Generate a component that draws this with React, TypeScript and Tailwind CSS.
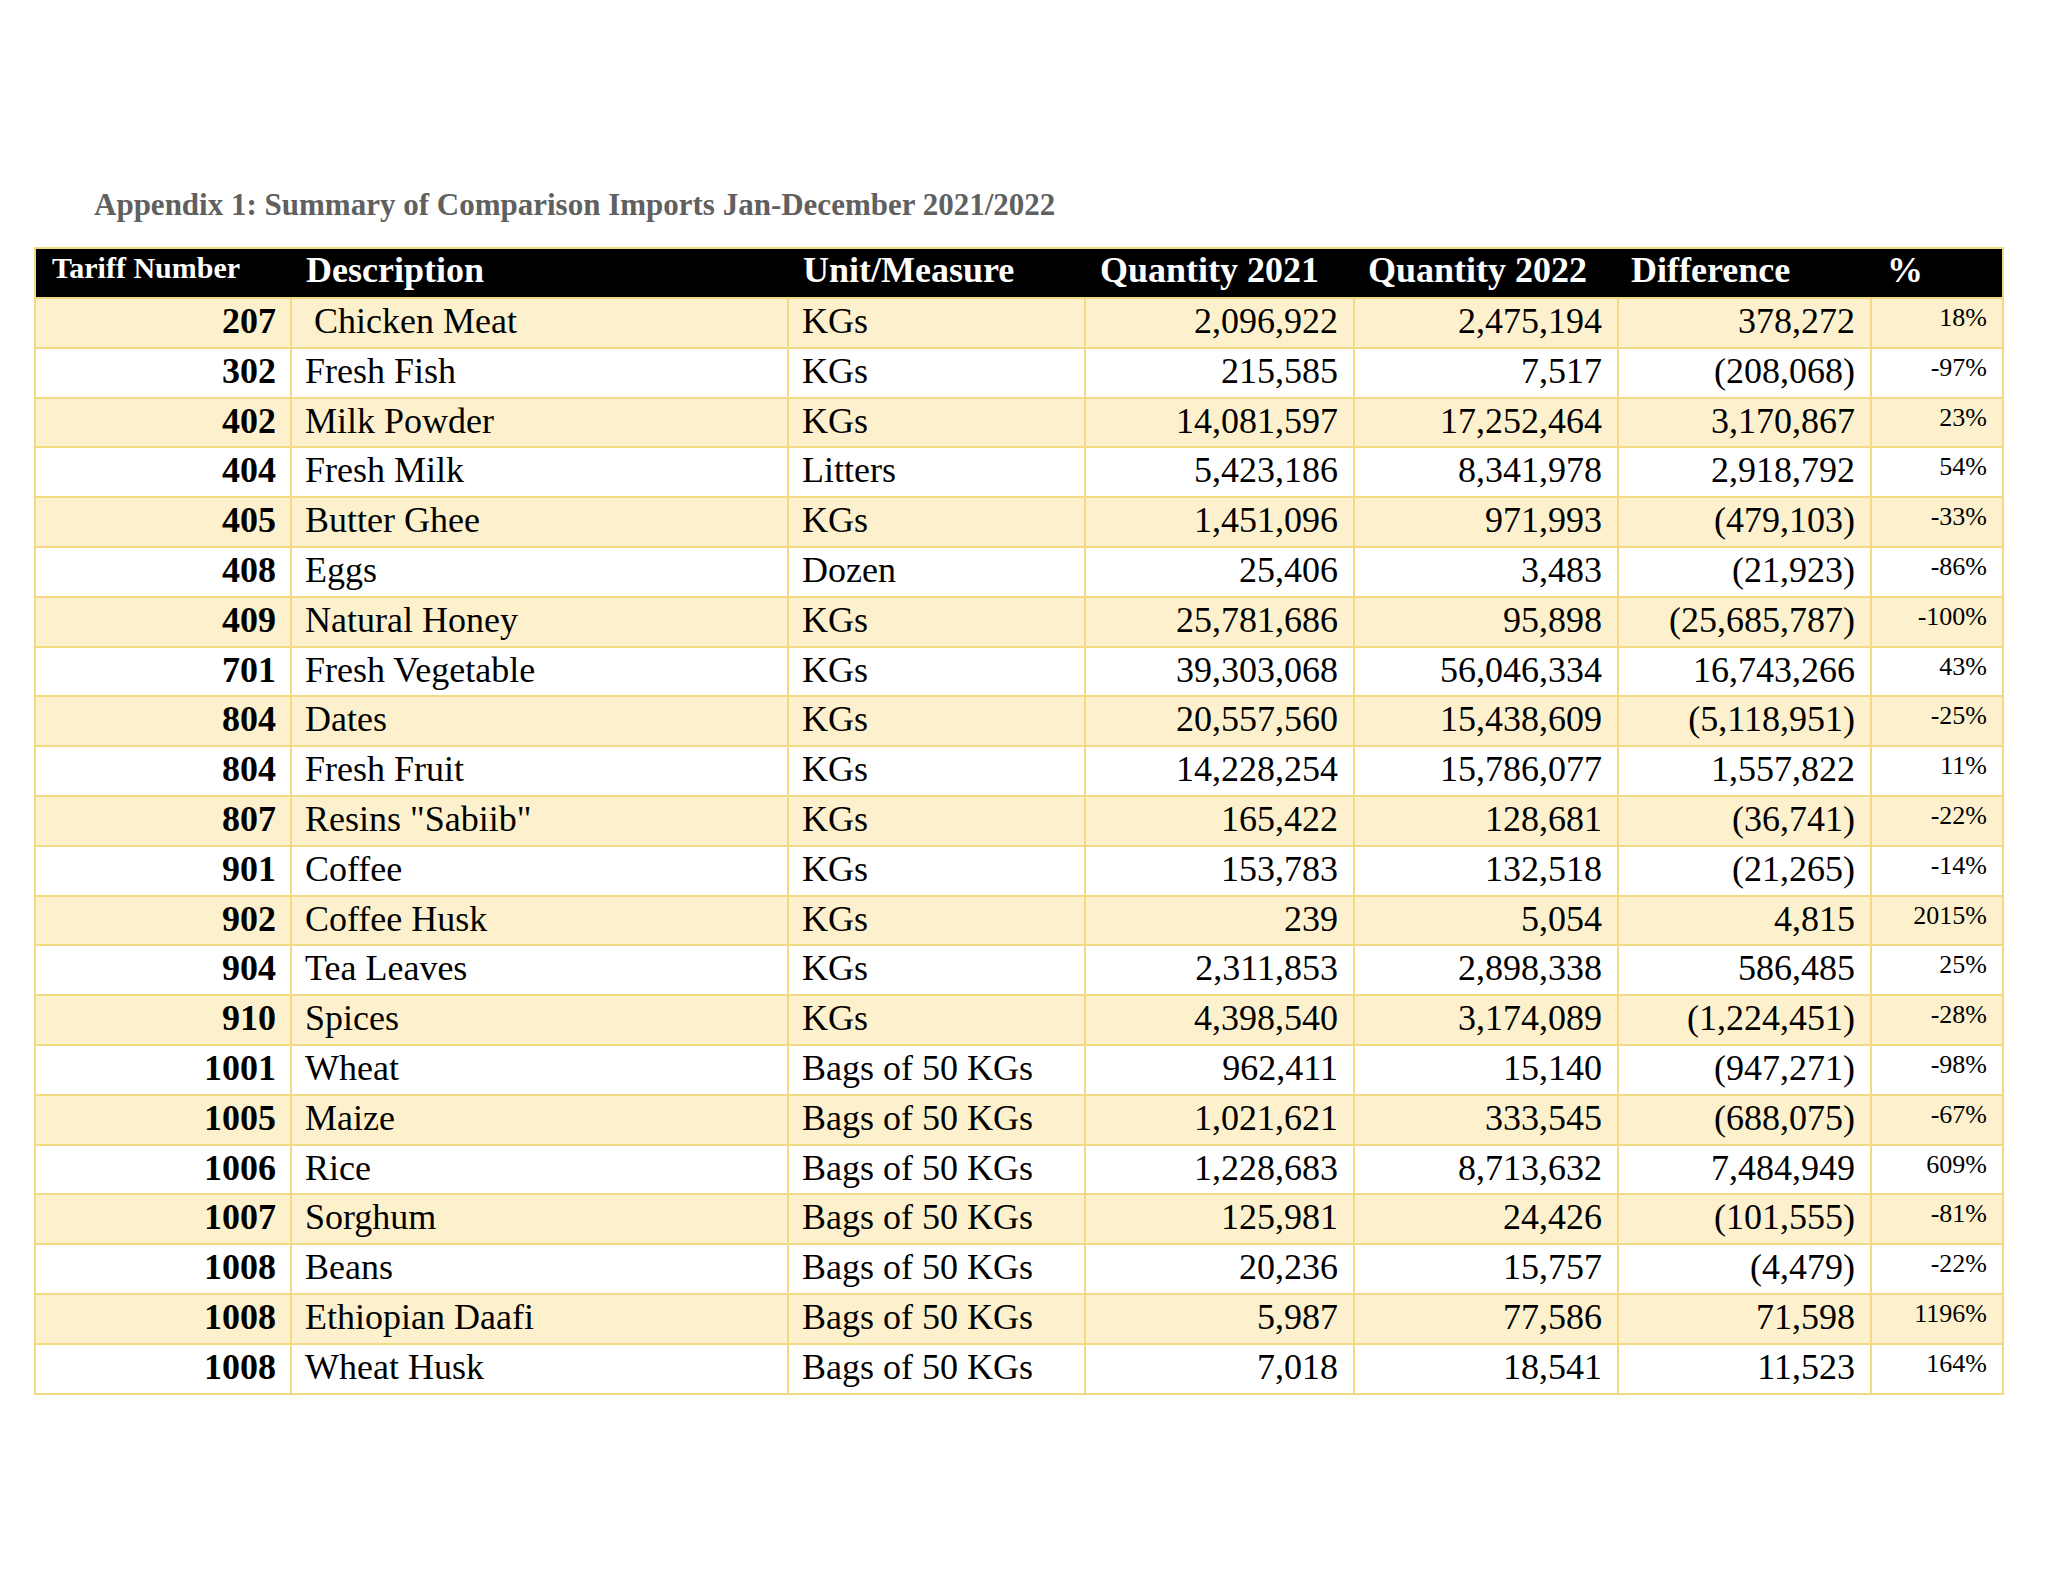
import React from "react";

type Row = [string, string, string, string, string, string, string];

const rows: Row[] = [
  ["207", "\u00a0Chicken Meat", "KGs", "2,096,922", "2,475,194", "378,272", "18%"],
  ["302", "Fresh Fish", "KGs", "215,585", "7,517", "(208,068)", "-97%"],
  ["402", "Milk Powder", "KGs", "14,081,597", "17,252,464", "3,170,867", "23%"],
  ["404", "Fresh Milk", "Litters", "5,423,186", "8,341,978", "2,918,792", "54%"],
  ["405", "Butter Ghee", "KGs", "1,451,096", "971,993", "(479,103)", "-33%"],
  ["408", "Eggs", "Dozen", "25,406", "3,483", "(21,923)", "-86%"],
  ["409", "Natural Honey", "KGs", "25,781,686", "95,898", "(25,685,787)", "-100%"],
  ["701", "Fresh Vegetable", "KGs", "39,303,068", "56,046,334", "16,743,266", "43%"],
  ["804", "Dates", "KGs", "20,557,560", "15,438,609", "(5,118,951)", "-25%"],
  ["804", "Fresh Fruit", "KGs", "14,228,254", "15,786,077", "1,557,822", "11%"],
  ["807", 'Resins "Sabiib"', "KGs", "165,422", "128,681", "(36,741)", "-22%"],
  ["901", "Coffee", "KGs", "153,783", "132,518", "(21,265)", "-14%"],
  ["902", "Coffee Husk", "KGs", "239", "5,054", "4,815", "2015%"],
  ["904", "Tea Leaves", "KGs", "2,311,853", "2,898,338", "586,485", "25%"],
  ["910", "Spices", "KGs", "4,398,540", "3,174,089", "(1,224,451)", "-28%"],
  ["1001", "Wheat", "Bags of 50 KGs", "962,411", "15,140", "(947,271)", "-98%"],
  ["1005", "Maize", "Bags of 50 KGs", "1,021,621", "333,545", "(688,075)", "-67%"],
  ["1006", "Rice", "Bags of 50 KGs", "1,228,683", "8,713,632", "7,484,949", "609%"],
  ["1007", "Sorghum", "Bags of 50 KGs", "125,981", "24,426", "(101,555)", "-81%"],
  ["1008", "Beans", "Bags of 50 KGs", "20,236", "15,757", "(4,479)", "-22%"],
  ["1008", "Ethiopian Daafi", "Bags of 50 KGs", "5,987", "77,586", "71,598", "1196%"],
  ["1008", "Wheat Husk", "Bags of 50 KGs", "7,018", "18,541", "11,523", "164%"],
];

const cols = "grid grid-cols-[256px_497px_297px_269px_264px_253px_130px]";

export default function App() {
  return (
    <div
      className="min-h-[1582px] w-[2048px] bg-white text-black"
      style={{ fontFamily: '"Liberation Serif", "Times New Roman", serif' }}
    >
      <div className="pt-[187px] pl-[94px]">
        <h1 className="text-[31px] leading-[36px] font-bold text-[#606060] whitespace-nowrap">
          Appendix 1: Summary of Comparison Imports Jan-December 2021/2022
        </h1>
      </div>
      <div className="mt-[24px] ml-[34px] w-[1970px] border-2 border-[#f4d983]">
        {/* Header */}
        <div className={`${cols} h-[48px] bg-black text-white font-bold whitespace-nowrap`}>
          <div className="pl-[16px] text-[30px] leading-[38px]">Tariff Number</div>
          <div className="pl-[14px] text-[36px] leading-[43px]">Description</div>
          <div className="pl-[14px] text-[36px] leading-[43px]">Unit/Measure</div>
          <div className="pl-[14px] text-[36px] leading-[43px]">Quantity 2021</div>
          <div className="pl-[13px] text-[36px] leading-[43px]">Quantity 2022</div>
          <div className="pl-[12px] text-[36px] leading-[43px]">Difference</div>
          <div className="pl-[15px] text-[36px] leading-[43px]">%</div>
        </div>
        {/* Body */}
        {rows.map((r, i) => (
          <div
            key={i}
            className={`${cols} h-[49.8px] border-t-2 border-[#f4d983] whitespace-nowrap ${
              i % 2 === 0 ? "bg-[#fcf1cc]" : "bg-white"
            }`}
          >
            <div className="border-r-2 border-[#f4d983] pr-[14px] text-right text-[36px] leading-[45px] font-bold">
              {r[0]}
            </div>
            <div className="border-r-2 border-[#f4d983] pl-[13px] text-[36px] leading-[45px]">
              {r[1]}
            </div>
            <div className="border-r-2 border-[#f4d983] pl-[13px] text-[36px] leading-[45px]">
              {r[2]}
            </div>
            <div className="border-r-2 border-[#f4d983] pr-[15px] text-right text-[36px] leading-[45px]">
              {r[3]}
            </div>
            <div className="border-r-2 border-[#f4d983] pr-[15px] text-right text-[36px] leading-[45px]">
              {r[4]}
            </div>
            <div className="border-r-2 border-[#f4d983] pr-[15px] text-right text-[36px] leading-[45px]">
              {r[5]}
            </div>
            <div className="pr-[15px] text-right text-[26px] leading-[37px]">{r[6]}</div>
          </div>
        ))}
      </div>
    </div>
  );
}
